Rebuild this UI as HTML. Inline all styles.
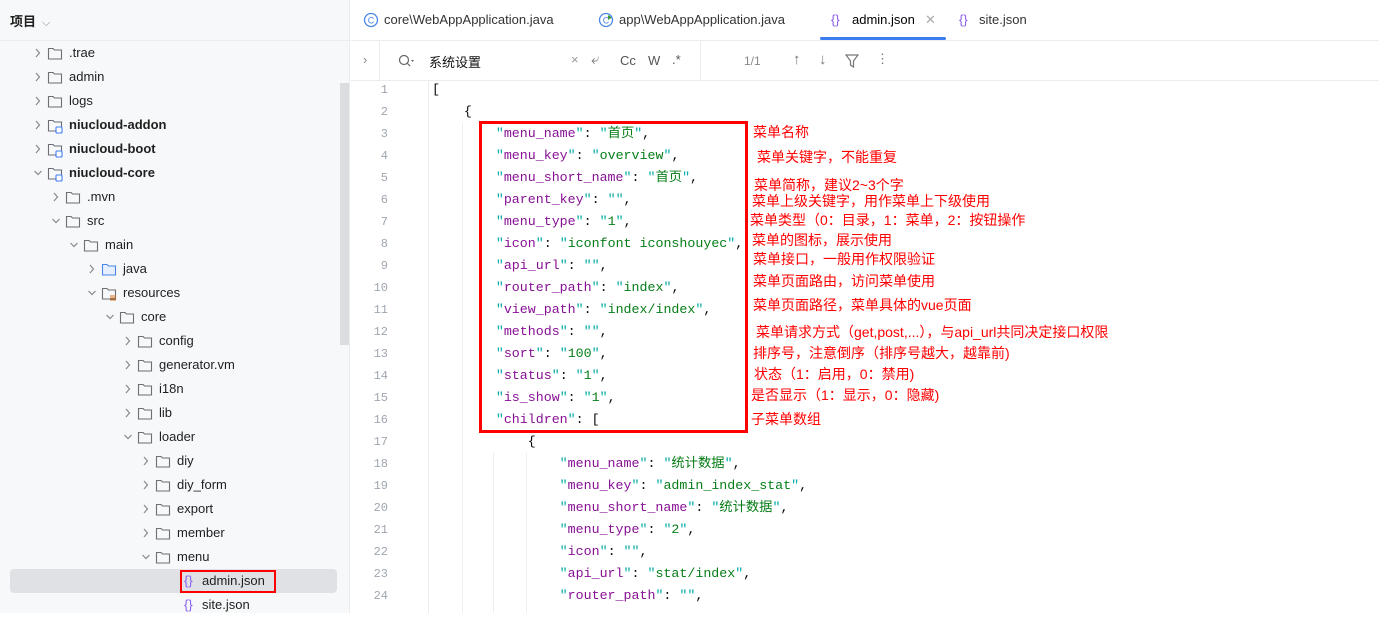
<!DOCTYPE html>
<html><head><meta charset="utf-8"><style>
*{margin:0;padding:0;box-sizing:border-box}
body{width:1379px;height:613px;overflow:hidden;background:#fff;font-family:"Liberation Sans","Noto Sans CJK SC",sans-serif;position:relative;color:#1f1f1f}
#side{position:absolute;left:0;top:0;width:350px;height:613px;background:#f7f8fa;border-right:1px solid #ebecf0}
.hdr{position:absolute;left:10px;top:11px;font-size:13px;font-weight:bold}
.hdr span{font-weight:normal;color:#888;margin-left:6px;font-size:11px}
.sep{position:absolute;left:0;top:40px;width:350px;height:1px;background:#ebecf0}
.row{position:absolute;height:24px;font-size:13px;line-height:24px;white-space:nowrap}
.row svg{position:absolute;top:0}
.row .t{position:absolute;top:0}
.sb{position:absolute;left:340px;top:83px;width:9px;height:262px;background:#dcdde0}
.sel{position:absolute;left:10px;top:569px;width:327px;height:24px;background:#dfe1e5;border-radius:4px}
#tabs{position:absolute;left:351px;top:0;right:0;height:41px;border-bottom:1px solid #ebecf0}
.tab{position:absolute;top:12px;font-size:13px;color:#333;white-space:nowrap}
#search{position:absolute;left:351px;top:41px;right:0;height:40px;border-bottom:1px solid #ebecf0;font-size:13px}
.ln{position:absolute;left:351px;width:37px;text-align:right;height:22px;line-height:22px;font-family:"Liberation Mono",monospace;font-size:12px;color:#a0a6b0}
.cl{position:absolute;height:22px;line-height:22px;font-family:"Liberation Mono","Noto Sans CJK SC",monospace;font-size:13.3px;white-space:pre;color:#080808}
.k{color:#871094}.q{color:#0aa}.s{color:#067d17}
.ann{position:absolute;color:#f00;font-size:14px;white-space:nowrap;line-height:16px}
</style></head><body>
<div id="side">
<div class="hdr">项目<span>⌵</span></div>
<div class="sep"></div>
<div class="sb"></div>
<div class="sel"></div>
</div>

<div id="tabs">
<svg style="position:absolute;left:12px;top:12px" width="16" height="16"><circle cx="8" cy="8" r="6.5" fill="none" stroke="#4a86e8" stroke-width="1.3"/><text x="8" y="11.5" font-size="9" text-anchor="middle" fill="#4a86e8" font-family="Liberation Sans">C</text></svg>
<div class="tab" style="left:33px">core\WebAppApplication.java</div>
<svg style="position:absolute;left:247px;top:12px" width="16" height="16"><circle cx="8" cy="8" r="6.5" fill="none" stroke="#4a86e8" stroke-width="1.3"/><text x="8" y="11.5" font-size="9" text-anchor="middle" fill="#4a86e8" font-family="Liberation Sans">C</text><path d="M10 3 L14 5.5 L10 8Z" fill="#3a9a3a"/></svg>
<div class="tab" style="left:268px">app\WebAppApplication.java</div>
<div class="tab" style="left:480px;color:#8a5cf0">{}</div>
<div class="tab" style="left:501px;color:#000">admin.json</div>
<div class="tab" style="left:574px;color:#aaa">✕</div>
<div style="position:absolute;left:469px;top:37px;width:126px;height:3px;background:#3b7cf0;border-radius:2px"></div>
<div class="tab" style="left:608px;color:#8a5cf0">{}</div>
<div class="tab" style="left:628px">site.json</div>
</div>

<div id="search">
<div style="position:absolute;left:12px;top:11px;color:#888">›</div>
<div style="position:absolute;left:28px;top:0;width:1px;height:39px;background:#ebecf0"></div>
<svg style="position:absolute;left:46px;top:12px" width="18" height="16"><circle cx="7" cy="7" r="4.5" fill="none" stroke="#666" stroke-width="1.2"/><path d="M10 10 L13 13" stroke="#666" stroke-width="1.2"/><path d="M14 7 L17 7 L15.5 9Z" fill="#666"/></svg>
<div style="position:absolute;left:78px;top:11px;color:#111">系统设置</div>
<div style="position:absolute;left:220px;top:11px;color:#999">×</div>
<div style="position:absolute;left:240px;top:10px;color:#777;font-size:15px">⤶</div>
<div style="position:absolute;left:269px;top:12px;color:#555">Cc</div>
<div style="position:absolute;left:297px;top:12px;color:#555">W</div>
<div style="position:absolute;left:321px;top:11px;color:#555">.*</div>
<div style="position:absolute;left:349px;top:0;width:1px;height:39px;background:#ebecf0"></div>
<div style="position:absolute;left:393px;top:13px;color:#888;font-size:12px">1/1</div>
<div style="position:absolute;left:442px;top:10px;color:#777;font-size:15px">↑</div>
<div style="position:absolute;left:468px;top:10px;color:#777;font-size:15px">↓</div>
<svg style="position:absolute;left:494px;top:13px" width="14" height="14"><path d="M1 1 H13 L8.5 7 V13 L5.5 11 V7Z" fill="none" stroke="#777" stroke-width="1.2"/></svg>
<div style="position:absolute;left:525px;top:10px;color:#777">⋮</div>
</div>

<div style="position:absolute;left:428px;top:81px;width:1px;height:532px;background:#ebecf0"></div>
<div style="position:absolute;left:462px;top:123px;width:1px;height:490px;background:#eeeeee"></div>
<div style="position:absolute;left:493px;top:453px;width:1px;height:160px;background:#eeeeee"></div>
<div style="position:absolute;left:526px;top:453px;width:1px;height:160px;background:#eeeeee"></div>

<div id="code"></div>

<div style="position:absolute;left:479px;top:121px;width:269px;height:312px;border:3px solid #f00"></div>

<div class="ann" style="left:753px;top:124px">菜单名称</div>
<div class="ann" style="left:757px;top:149px">菜单关键字，不能重复</div>
<div class="ann" style="left:754px;top:177px">菜单简称，建议2~3个字</div>
<div class="ann" style="left:752px;top:193px">菜单上级关键字，用作菜单上下级使用</div>
<div class="ann" style="left:750px;top:212px">菜单类型（0：目录，1：菜单，2：按钮操作</div>
<div class="ann" style="left:752px;top:232px">菜单的图标，展示使用</div>
<div class="ann" style="left:753px;top:251px">菜单接口，一般用作权限验证</div>
<div class="ann" style="left:753px;top:273px">菜单页面路由，访问菜单使用</div>
<div class="ann" style="left:753px;top:297px">菜单页面路径，菜单具体的vue页面</div>
<div class="ann" style="left:756px;top:324px">菜单请求方式（get,post,...），与api_url共同决定接口权限</div>
<div class="ann" style="left:753px;top:345px">排序号，注意倒序（排序号越大，越靠前)</div>
<div class="ann" style="left:754px;top:366px">状态（1：启用，0：禁用)</div>
<div class="ann" style="left:751px;top:387px">是否显示（1：显示，0：隐藏)</div>
<div class="ann" style="left:751px;top:411px">子菜单数组</div>

<div id="tr"></div>
<div style="position:absolute;left:180px;top:570px;width:96px;height:23px;border:2px solid #f00"></div>
<script>
var rows=[
[0,'c','.trae'],[0,'c','admin'],[0,'c','logs'],[0,'cm','niucloud-addon',1],[0,'cm','niucloud-boot',1],[0,'om','niucloud-core',1],
[1,'c','.mvn'],[1,'o','src'],[2,'o','main'],[3,'cb','java'],[3,'or','resources'],[4,'o','core'],
[5,'c','config'],[5,'c','generator.vm'],[5,'c','i18n'],[5,'c','lib'],[5,'o','loader'],
[6,'c','diy'],[6,'c','diy_form'],[6,'c','export'],[6,'c','member'],[6,'o','menu'],[7,'j','admin.json'],[7,'j','site.json']];
var h='';
rows.forEach(function(r,i){
 var y=41+i*24, cx=33+r[0]*18;
 var s='<div class="row" style="left:0;top:'+y+'px;width:350px">';
 if(r[1]=='j'){
  s+='<span class="t" style="left:184px;color:#8a5cf0">{}</span><span class="t" style="left:202px">'+r[2]+'</span>';
 } else {
  var open=r[1][0]=='o';
  s+='<svg style="left:'+cx+'px" width="10" height="24">'+(open?'<path d="M1.5 10 L5 13.5 L8.5 10" fill="none" stroke="#888" stroke-width="1.2"/>':'<path d="M3 8 L6.5 12 L3 16" fill="none" stroke="#888" stroke-width="1.2"/>')+'</svg>';
  var col=r[1].indexOf('b')>0?'#4a86e8':'#6e6e73';
  var fill=r[1].indexOf('b')>0?'#e6efff':'none';
  s+='<svg style="left:'+(cx+14)+'px" width="18" height="24"><path d="M1.5 7.5 H6 L7.5 9 H14.5 V18 H1.5Z" fill="'+fill+'" stroke="'+col+'" stroke-width="1.1"/>'+
   (r[1].indexOf('m')>0?'<rect x="9" y="14" width="6" height="6" rx="1" fill="#fff" stroke="#3b7cf0" stroke-width="1.1"/>':'')+
   (r[1].indexOf('r')>0?'<path d="M9 15 H15 M9 17 H15 M9 19 H15" stroke="#d9731e" stroke-width="1"/>':'')+'</svg>';
  s+='<span class="t" style="left:'+(cx+36)+'px;'+(r[3]?'font-weight:bold':'')+'">'+r[2]+'</span>';
 }
 s+='</div>';h+=s;
});
document.getElementById('tr').innerHTML=h;
function kv(ind,k,v,comma,raw){
 var sp='';for(var i=0;i<ind;i++)sp+=' ';
 var val=raw?v:'<span class="q">"</span><span class="s">'+v+'</span><span class="q">"</span>';
 return sp+'<span class="q">"</span><span class="k">'+k+'</span><span class="q">"</span>: '+val+(comma?',':'');
}
var L=['[','    {',
kv(8,'menu_name','首页',1),kv(8,'menu_key','overview',1),kv(8,'menu_short_name','首页',1),kv(8,'parent_key','',1),
kv(8,'menu_type','1',1),kv(8,'icon','iconfont iconshouyec',1),kv(8,'api_url','',1),kv(8,'router_path','index',1),
kv(8,'view_path','index/index',1),kv(8,'methods','',1),kv(8,'sort','100',1),kv(8,'status','1',1),kv(8,'is_show','1',1),
kv(8,'children','[',0,1),'            {',
kv(16,'menu_name','统计数据',1),kv(16,'menu_key','admin_index_stat',1),kv(16,'menu_short_name','统计数据',1),
kv(16,'menu_type','2',1),kv(16,'icon','',1),kv(16,'api_url','stat/index',1),kv(16,'router_path','',1)];
var c='';
L.forEach(function(t,i){var y=79+i*22;
 c+='<div class="ln" style="top:'+y+'px">'+(i+1)+'</div><div class="cl" style="left:432px;top:'+y+'px">'+t+'</div>';});
document.getElementById('code').innerHTML=c;
</script>
</body></html>
